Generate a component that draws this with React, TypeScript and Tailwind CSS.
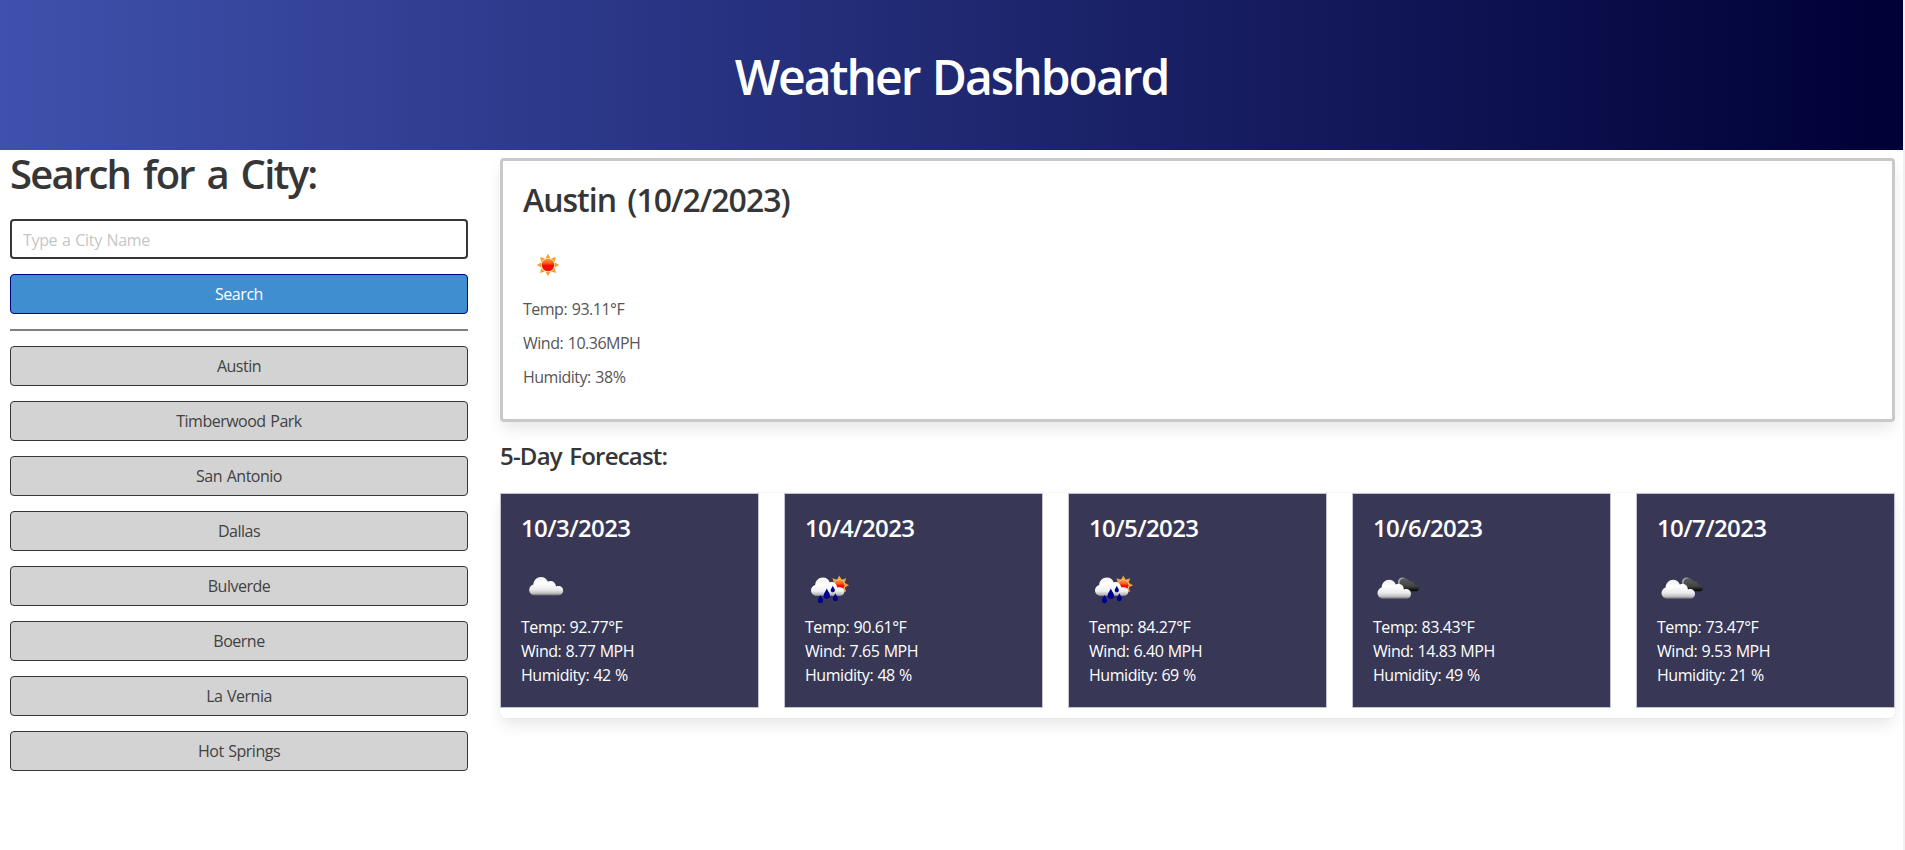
import React from 'react';

const CLOUD =
  'M6.2 18.5C2.8 18.5 0 16.2 0 12.9C0 10.3 1.8 8.2 4.2 7.4C4.5 3.2 7.7 0 11.8 0C15.1 0 17.4 1.7 18.6 4.6C19.4 4.1 20.4 3.9 21.4 3.9C24.2 3.9 26.4 5.9 26.9 9.4C27.6 9.1 28.4 9 29.2 9C32.1 9 34 11.1 34 13.6C34 16.5 31.8 18.5 29.2 18.5Z';

function Defs() {
  return (
    <svg className="absolute h-0 w-0" aria-hidden="true">
      <defs>
        <linearGradient id="cloudFill" x1="0" y1="0" x2="0" y2="1">
          <stop offset="0" stopColor="#ededed" />
          <stop offset="0.35" stopColor="#ffffff" />
          <stop offset="0.7" stopColor="#e9e9ea" />
          <stop offset="0.88" stopColor="#bdbdbf" />
          <stop offset="1" stopColor="#67676e" />
        </linearGradient>
        <linearGradient id="whiteFill" x1="0" y1="0" x2="0" y2="1">
          <stop offset="0" stopColor="#f4f4f4" />
          <stop offset="0.4" stopColor="#ffffff" />
          <stop offset="0.75" stopColor="#efeff0" />
          <stop offset="1" stopColor="#a2a2a8" />
        </linearGradient>
        <linearGradient id="darkFill" x1="0" y1="0" x2="0" y2="1">
          <stop offset="0" stopColor="#5c5c5c" />
          <stop offset="0.6" stopColor="#444444" />
          <stop offset="0.8" stopColor="#222222" />
          <stop offset="1" stopColor="#000000" />
        </linearGradient>
        <linearGradient id="discFill" x1="0" y1="0" x2="0" y2="1">
          <stop offset="0" stopColor="#ff9a3c" />
          <stop offset="0.35" stopColor="#ff5a1e" />
          <stop offset="0.55" stopColor="#fb0a00" />
          <stop offset="1" stopColor="#f51000" />
        </linearGradient>
      </defs>
    </svg>
  );
}

function SunShape({ x, y, scale }: { x: number; y: number; scale: number }) {
  return (
    <g transform={`translate(${x} ${y}) scale(${scale})`}>
      {[0, 45, 90, 135, 180, 225, 270, 315].map((a) => (
        <path key={a} d="M-2.5 -6.8L0 -11.3L2.5 -6.8Z" fill="#f3a032" transform={`rotate(${a})`} />
      ))}
      <circle r="7.1" fill="#ffd9a0" />
      <circle r="6.2" fill="url(#discFill)" />
    </g>
  );
}

function Drop({ x, y, s }: { x: number; y: number; s: number }) {
  return (
    <path
      transform={`translate(${x} ${y}) scale(${s})`}
      d="M0 -5.2C1 -2.6 3.1 -.6 3.1 1.6C3.1 3.5 1.8 4.6 0 4.6C-1.8 4.6 -3.1 3.5 -3.1 1.6C-3.1 -.6 -1 -2.6 0 -5.2Z"
      fill="#00008f"
    />
  );
}

type Kind = 'sun' | 'cloud' | 'rain' | 'broken';

function WeatherIcon({ kind }: { kind: Kind }) {
  return (
    <svg width="50" height="50" viewBox="0 0 50 50" className="block">
      {kind === 'sun' && <SunShape x={25} y={25} scale={1} />}
      {kind === 'cloud' && <path d={CLOUD} transform="translate(8.2 14)" fill="url(#cloudFill)" />}
      {kind === 'rain' && (
        <>
          <SunShape x={34.3} y={22.2} scale={0.86} />
          <path
            d="M11.6 32.8C8.4 32.8 6 30.4 6 27.3C6 24.8 7.8 22.8 10.2 22.1C10.4 17.9 13.6 14.6 17.8 14.6C21.2 14.6 23.6 16.4 24.8 19.4C25.4 19.2 26 19.1 26.7 19.1C29.6 19.1 31.6 21.4 32.2 24.6C33 24.3 33.8 24.2 34.6 24.2C37.4 24.2 39.4 26.2 39.4 28.6C39.4 31 37.5 32.8 35 32.8Z"
            fill="url(#whiteFill)"
          />
          <Drop x={15.5} y={36.4} s={0.83} />
          <Drop x={21.8} y={31} s={1.05} />
          <Drop x={27.8} y={26.2} s={0.68} />
          <Drop x={30.4} y={34.5} s={0.8} />
        </>
      )}
      {kind === 'broken' && (
        <>
          <circle cx="29.5" cy="19" r="4.6" fill="#a0a0a6" />
          <path
            d="M30 28.3L26.5 19.5C27.2 16.6 29.2 15.3 31.7 15.3C34 15.3 35.8 16.7 36.5 18.6C39 17.6 41.2 19.4 41.6 22.2C44.2 21.6 46 23.3 46 25.2C46 27.2 44.4 28.3 42.5 28.3Z"
            fill="url(#darkFill)"
          />
          <path d={CLOUD} transform="translate(4.5 16.8) scale(0.985 1.03)" fill="url(#cloudFill)" />
        </>
      )}
    </svg>
  );
}

const cities = ['Austin', 'Timberwood Park', 'San Antonio', 'Dallas', 'Bulverde', 'Boerne', 'La Vernia', 'Hot Springs'];

const days: { date: string; kind: Kind; temp: string; wind: string; humidity: string }[] = [
  { date: '10/3/2023', kind: 'cloud', temp: '92.77', wind: '8.77', humidity: '42' },
  { date: '10/4/2023', kind: 'rain', temp: '90.61', wind: '7.65', humidity: '48' },
  { date: '10/5/2023', kind: 'rain', temp: '84.27', wind: '6.40', humidity: '69' },
  { date: '10/6/2023', kind: 'broken', temp: '83.43', wind: '14.83', humidity: '49' },
  { date: '10/7/2023', kind: 'broken', temp: '73.47', wind: '9.53', humidity: '21' },
];

export default function App() {
  return (
    <div className="flex h-[850px] w-full overflow-hidden bg-white font-['Open_Sans','Noto_Sans',sans-serif] text-base leading-6 text-[#4a4a4a]">
      <Defs />
      <div className="min-w-0 flex-1">
        <header className="flex h-[150px] items-center justify-center bg-[linear-gradient(to_right,#3f51ad,#000036)] pt-[3px]">
          <h1 className="text-[48px] leading-[54px] font-semibold tracking-[-2px] text-white [word-spacing:2px]">
            Weather Dashboard
          </h1>
        </header>
        <div className="flex">
          <aside className="ml-2.5 w-[458px] pt-px">
            <h2 className="mb-[23px] text-[40px] leading-[45px] font-semibold tracking-[-1.75px] text-[#363636] [word-spacing:4px]">
              Search for a City:
            </h2>
            <input
              className="block h-10 w-full rounded border-2 border-[#363636] bg-white px-[11px] pt-0.5 tracking-[-0.35px] outline-none [word-spacing:1px] placeholder:text-[#c6c6c6]"
              placeholder="Type a City Name"
            />
            <button className="mt-[15px] block h-10 w-full rounded border border-[#00008b] bg-[#3e8ed0] tracking-[-0.45px] text-white">
              Search
            </button>
            <hr className="my-[15px] h-0.5 border-0 bg-[#808080]" />
            <div className="flex flex-col gap-[15px]">
              {cities.map((c) => (
                <button
                  key={c}
                  className="h-10 rounded border border-[#363636] bg-[#d3d3d3] tracking-[-0.5px] text-[#424242] [word-spacing:1px]"
                >
                  {c}
                </button>
              ))}
            </div>
          </aside>
          <main className="mr-2 ml-8 flex-1 pt-2">
            <section className="h-[264px] rounded border-[3px] border-[#c9c9cb] px-5 pt-[21px] shadow-[0_8px_16px_-2px_rgba(10,10,10,0.1)]">
              <h2 className="text-[32px] leading-9 font-semibold tracking-[-1px] text-[#363636] [word-spacing:4px]">
                Austin (10/2/2023)
              </h2>
              <div className="mt-[22px] mb-[7px]">
                <WeatherIcon kind="sun" />
              </div>
              <div className="flex flex-col gap-2.5 tracking-[-0.5px] text-[#555555] [word-spacing:1px]">
                <p>Temp: 93.11°F</p>
                <p>Wind: 10.36MPH</p>
                <p>Humidity: 38%</p>
              </div>
            </section>
            <h3 className="mt-4 mb-[19px] text-2xl leading-9 font-semibold tracking-[-0.8px] text-[#363636] [word-spacing:2px]">
              5-Day Forecast:
            </h3>
            <section className="grid grid-cols-5 gap-[25px] rounded-md bg-white pb-2.5 shadow-[0_8px_16px_-2px_rgba(10,10,10,0.1),0_0_0_1px_rgba(10,10,10,0.02)]">
              {days.map((d) => (
                <article key={d.date} className="h-[215px] border border-[#c3c3cf] bg-[#383856] px-5 pt-5 text-white">
                  <h4 className="text-2xl leading-[27px] font-semibold tracking-[-0.6px]">{d.date}</h4>
                  <div className="mt-[22px] mb-0.5">
                    <WeatherIcon kind={d.kind} />
                  </div>
                  <div className="tracking-[-0.45px] [word-spacing:0.5px]">
                    <p>Temp: {d.temp}°F</p>
                    <p>Wind: {d.wind} MPH</p>
                    <p>Humidity: {d.humidity} %</p>
                  </div>
                </article>
              ))}
            </section>
          </main>
        </div>
      </div>
      <div className="w-0.5 bg-[#f1f1f1]" />
    </div>
  );
}
